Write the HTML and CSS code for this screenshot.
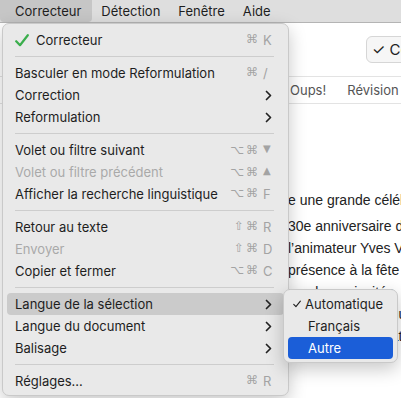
FILE: index.html
```html
<!DOCTYPE html>
<html lang="fr">
<head>
  <meta charset="UTF-8"/>
  <title>Correcteur</title>
  <link rel="stylesheet" href="styles.css">
</head>
<body>

  <!-- BARRE DE MENUS -->
  <div class="menubar">
    <span class="mb-item active">Correcteur</span>
    <span class="mb-item">Détection</span>
    <span class="mb-item">Fenêtre</span>
    <span class="mb-item">Aide</span>
  </div>

  <!-- FENETRE EN ARRIERE-PLAN -->
  <div class="app">
    <div class="toolbar">
      <button class="tb-btn">✓ Corriger</button>
    </div>
    <div class="tabs">
      <span class="tab">Oups!</span>
      <span class="tab">Révision</span>
    </div>
    <div class="doc">
      <p class="para first">e une grande célébration</p>
      <p class="para">30e anniversaire de l’émission</p>
      <p class="para">l’animateur Yves Vallières</p>
      <p class="para">présence à la fête et</p>
      <p class="para">nombreux invités, dont</p>
      <p class="para">les anciens collègues</p>
      <p class="para">de l’équipe du matin.</p>
    </div>
  </div>

  <!-- MENU CORRECTEUR -->
  <div class="menu main-menu">
    <div class="item">
      <svg class="green-check" width="14" height="13" viewBox="0 0 14 13"><path d="M1.2 7.2 L5 11.2 L12.8 1.2" fill="none" stroke="#3aae4c" stroke-width="2.2" stroke-linecap="round" stroke-linejoin="round"/></svg>
      <span class="label">Correcteur</span>
      <span class="shortcut"><span class="mods">⌘</span><span class="key">K</span></span>
    </div>
    <div class="sep"></div>
    <div class="item">
      <span class="label">Basculer en mode Reformulation</span>
      <span class="shortcut"><span class="mods">⌘</span><span class="key">/</span></span>
    </div>
    <div class="item">
      <span class="label">Correction</span>
      <svg class="chev" width="7" height="11" viewBox="0 0 7 11"><path d="M1.5 1.5 L5.5 5.5 L1.5 9.5" fill="none" stroke="#222" stroke-width="1.7" stroke-linecap="round" stroke-linejoin="round"/></svg>
    </div>
    <div class="item">
      <span class="label">Reformulation</span>
      <svg class="chev" width="7" height="11" viewBox="0 0 7 11"><path d="M1.5 1.5 L5.5 5.5 L1.5 9.5" fill="none" stroke="#222" stroke-width="1.7" stroke-linecap="round" stroke-linejoin="round"/></svg>
    </div>
    <div class="sep"></div>
    <div class="item">
      <span class="label">Volet ou filtre suivant</span>
      <span class="shortcut"><span class="mods">⌥⌘</span><span class="key tri">▼</span></span>
    </div>
    <div class="item disabled">
      <span class="label">Volet ou filtre précédent</span>
      <span class="shortcut"><span class="mods">⌥⌘</span><span class="key tri">▲</span></span>
    </div>
    <div class="item">
      <span class="label">Afficher la recherche linguistique</span>
      <span class="shortcut"><span class="mods">⌥⌘</span><span class="key">F</span></span>
    </div>
    <div class="sep"></div>
    <div class="item">
      <span class="label">Retour au texte</span>
      <span class="shortcut"><span class="mods">⇧⌘</span><span class="key">R</span></span>
    </div>
    <div class="item disabled">
      <span class="label">Envoyer</span>
      <span class="shortcut"><span class="mods">⇧⌘</span><span class="key">D</span></span>
    </div>
    <div class="item">
      <span class="label">Copier et fermer</span>
      <span class="shortcut"><span class="mods">⌥⌘</span><span class="key">C</span></span>
    </div>
    <div class="sep"></div>
    <div class="item hover">
      <span class="label">Langue de la sélection</span>
      <svg class="chev" width="7" height="11" viewBox="0 0 7 11"><path d="M1.5 1.5 L5.5 5.5 L1.5 9.5" fill="none" stroke="#222" stroke-width="1.7" stroke-linecap="round" stroke-linejoin="round"/></svg>
    </div>
    <div class="item">
      <span class="label">Langue du document</span>
      <svg class="chev" width="7" height="11" viewBox="0 0 7 11"><path d="M1.5 1.5 L5.5 5.5 L1.5 9.5" fill="none" stroke="#222" stroke-width="1.7" stroke-linecap="round" stroke-linejoin="round"/></svg>
    </div>
    <div class="item">
      <span class="label">Balisage</span>
      <svg class="chev" width="7" height="11" viewBox="0 0 7 11"><path d="M1.5 1.5 L5.5 5.5 L1.5 9.5" fill="none" stroke="#222" stroke-width="1.7" stroke-linecap="round" stroke-linejoin="round"/></svg>
    </div>
    <div class="sep"></div>
    <div class="item">
      <span class="label">Réglages...</span>
      <span class="shortcut"><span class="mods">⌘</span><span class="key">R</span></span>
    </div>
  </div>

  <!-- SOUS-MENU LANGUE -->
  <div class="menu submenu">
    <div class="item checked">
      <svg class="small-check" width="11" height="10" viewBox="0 0 11 10"><path d="M1 5.4 L4 8.6 L10 1.2" fill="none" stroke="#1e1e1e" stroke-width="1.5" stroke-linecap="round" stroke-linejoin="round"/></svg>
      <span class="label">Automatique</span>
    </div>
    <div class="item">
      <span class="label">Français</span>
    </div>
    <div class="item selected">
      <span class="label">Autre</span>
    </div>
  </div>

</body>
</html>
```

FILE: styles.css
```css
* {
  margin: 0;
  padding: 0;
  box-sizing: border-box;
}

body {
  font-family: 'Inter', 'Liberation Sans', sans-serif;
  font-size: 13px;
  color: #1e1e1e;
  background: #ffffff;
  width: 401px;
  height: 398px;
  overflow: hidden;
  position: relative;
}

/* barre de menus */
.menubar {
  height: 23px;
  background: #dedede;
  border-bottom: 1px solid #b4b4b4;
  display: flex;
  align-items: center;
  white-space: nowrap;
}

.mb-item {
  height: 22px;
  line-height: 22px;
  padding: 0 9px;
}

.mb-item.active {
  background: #c6c6c6;
  border-radius: 0 0 4px 4px;
  padding: 0 11px 0 15px;
}

/* fenetre derriere le menu */
.app {
  background: #ffffff;
}

.toolbar {
  height: 53px;
  display: flex;
  align-items: center;
  padding-left: 366px;
}

.tb-btn {
  height: 27px;
  padding: 0 5px;
  font-family: inherit;
  font-size: 15px;
  color: #222;
  background: #f6f6f6;
  border: 1px solid #d6d6d6;
  border-radius: 6px;
  white-space: nowrap;
}

.tabs {
  height: 28px;
  border-top: 1px solid #e3e3e3;
  border-bottom: 1px solid #e3e3e3;
  display: flex;
  align-items: center;
  gap: 21px;
  padding-left: 290px;
  font-size: 13px;
  color: #555;
  white-space: nowrap;
}

.doc {
  padding: 85px 0 0 288px;
  font-family: 'Liberation Sans', sans-serif;
  font-size: 14px;
  color: #222;
  white-space: nowrap;
}

.para {
  line-height: 22px;
}

.para.first {
  margin-bottom: 4px;
}

/* menus */
.menu {
  position: absolute;
  background: #e9e9e9;
  border: 1px solid #c9c9c9;
  border-radius: 7px;
  box-shadow: 0 6px 18px rgba(0, 0, 0, 0.22);
  white-space: nowrap;
}

.main-menu {
  left: 2px;
  top: 23px;
  width: 287px;
  padding: 5px 4px 3px;
}

.submenu {
  left: 283px;
  top: 289px;
  width: 115px;
  padding: 3px 4px;
}

.item {
  height: 22px;
  display: flex;
  align-items: center;
  padding: 0 10px 0 8px;
  border-radius: 4px;
}

.item .label {
  flex: 1;
}

.item.disabled {
  color: #a9a9a9;
}

.item.hover {
  background: #cbcbcb;
}

.green-check {
  margin-right: 7px;
}

.shortcut {
  display: flex;
  color: #a3a3a3;
  font-family: 'DejaVu Sans', sans-serif;
  font-size: 12px;
}

.shortcut .mods {
  letter-spacing: 2px;
  font-size: 12px;
}

.shortcut .key {
  width: 11px;
  margin-left: 3px;
  font-family: 'Inter', sans-serif;
  font-size: 13px;
}

.shortcut .key.tri {
  font-family: 'DejaVu Sans', sans-serif;
  font-size: 10px;
}

.chev {
  margin-right: 2px;
}

.sep {
  height: 11px;
  display: flex;
  align-items: center;
  padding: 0 10px 0 8px;
}

.sep::after {
  content: "";
  flex: 1;
  height: 1px;
  background: #cdcdcd;
}

.submenu .item {
  padding-left: 20px;
}

.submenu .item.checked {
  padding-left: 5px;
}

.small-check {
  margin-right: 4px;
}

.submenu .item.selected {
  background: #1b5ed8;
  color: #ffffff;
}
```
